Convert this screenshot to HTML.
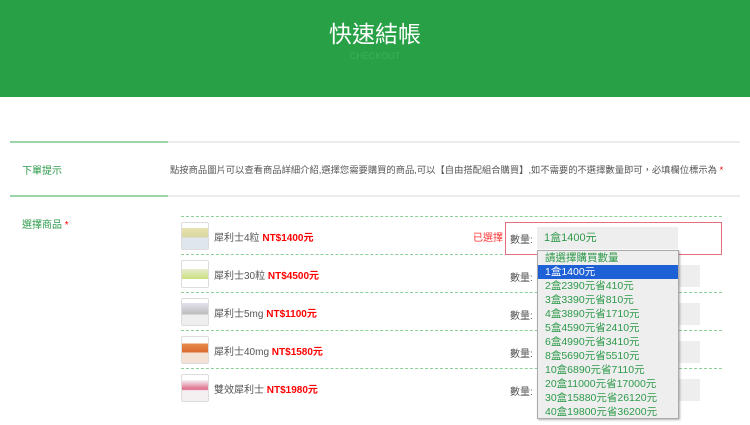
<!DOCTYPE html>
<html><head><meta charset="utf-8"><style>
*{margin:0;padding:0;box-sizing:border-box}
body{width:750px;height:425px;overflow:hidden;background:#fff;font-family:"Liberation Sans","Noto Sans CJK TC",sans-serif;position:relative;color:#555}
.hd{position:absolute;left:0;top:0;width:750px;height:97px;background:#28a046}
.t{position:absolute;top:15px;left:0;width:750px;text-align:center;color:#fff;font-size:23px}
.c{position:absolute;top:51px;left:0;width:750px;text-align:center;color:#3bb25a;font-size:9px}
.a{position:absolute}
.gl{height:2px;background:#9cd6a8}
.gr{height:2px;background:#ececec}
.dot{position:absolute;left:181px;width:541px;border-top:1px dashed #8ccf97}
.lab{font-size:10px;color:#2d9a4a}
.img{position:absolute;left:181px;width:28px;height:28px;border:1px solid #ddd;border-radius:2px;background:#fff}
.pn{position:absolute;left:214px;font-size:10px;color:#555}
.pn b{color:#f00}
.q{position:absolute;left:510px;font-size:10px;color:#555}
.sel{position:absolute;left:537px;width:163px;height:22px;background:#eee}
.dd{position:absolute;left:537px;top:250px;width:142px;height:169px;background:#eee;border:1px solid #aaa;box-shadow:1px 1px 2px rgba(0,0,0,.3)}
.dd div{height:14px;line-height:14px;font-size:10.5px;color:#2d9a4a;padding-left:7px}
.dd .s{background:#1e60d6;color:#fff}
</style></head><body>
<div class="hd"></div>
<div class="t">快速結帳</div>
<div class="c">CHECKOUT</div>
<div class="a gl" style="left:10px;top:141px;width:158px"></div>
<div class="a gr" style="left:168px;top:141px;width:572px"></div>
<div class="a gl" style="left:10px;top:195px;width:158px"></div>
<div class="a gr" style="left:168px;top:195px;width:572px"></div>
<div class="a lab" style="left:22px;top:162px">下單提示</div>
<div class="a" style="left:170px;top:162px;font-size:9.3px;color:#555;white-space:nowrap">點按商品圖片可以查看商品詳細介紹,選擇您需要購買的商品,可以【自由搭配組合購買】,如不需要的不選擇數量即可，必填欄位標示為 <span style="color:#f00">*</span></div>
<div class="a lab" style="left:22px;top:216px">選擇商品 <span style="color:#f00">*</span></div>
<div class="dot" style="top:216px"></div>
<div class="dot" style="top:254px"></div>
<div class="dot" style="top:292px"></div>
<div class="dot" style="top:330px"></div>
<div class="dot" style="top:368px"></div>
<div class="img" style="top:222px;background:linear-gradient(#fff 20%,#e8e2b0 20%,#d9d7a0 55%,#dfe6ee 55%)"></div>
<div class="img" style="top:260px;background:linear-gradient(#fff 30%,#e7ecd2 30%,#c9df7a 70%,#fff 70%)"></div>
<div class="img" style="top:298px;background:linear-gradient(#fff 15%,#e3e3ee 15%,#bbb 60%,#eee 60%)"></div>
<div class="img" style="top:336px;background:linear-gradient(#fff 25%,#e68a4a 25%,#d96a30 60%,#f3e2d5 60%)"></div>
<div class="img" style="top:374px;background:linear-gradient(#fff 20%,#f4f0f2 20%,#e06a8a 55%,#f4f0f2 60%)"></div>
<div class="pn" style="top:229px">犀利士4粒 <b>NT$1400元</b></div>
<div class="pn" style="top:267px">犀利士30粒 <b>NT$4500元</b></div>
<div class="pn" style="top:305px">犀利士5mg <b>NT$1100元</b></div>
<div class="pn" style="top:343px">犀利士40mg <b>NT$1580元</b></div>
<div class="pn" style="top:381px">雙效犀利士 <b>NT$1980元</b></div>
<div class="a" style="left:473px;top:229px;font-size:10px;color:#f33">已選擇</div>
<div class="a" style="left:505px;top:222px;width:217px;height:33px;border:1px solid #e57080"></div>
<div class="sel" style="top:265px"></div>
<div class="sel" style="top:303px"></div>
<div class="sel" style="top:341px"></div>
<div class="sel" style="top:379px"></div>
<div class="a" style="left:537px;top:227px;width:141px;height:22px;background:#eee;font-size:11px;color:#2d9a4a;line-height:22px;padding-left:7px">1盒1400元</div>
<div class="q" style="top:231px">數量:</div>
<div class="q" style="top:269px">數量:</div>
<div class="q" style="top:307px">數量:</div>
<div class="q" style="top:345px">數量:</div>
<div class="q" style="top:383px">數量:</div>
<div class="dd">
<div>請選擇購買數量</div><div class="s">1盒1400元</div><div>2盒2390元省410元</div><div>3盒3390元省810元</div><div>4盒3890元省1710元</div><div>5盒4590元省2410元</div><div>6盒4990元省3410元</div><div>8盒5690元省5510元</div><div>10盒6890元省7110元</div><div>20盒11000元省17000元</div><div>30盒15880元省26120元</div><div>40盒19800元省36200元</div>
</div>
</body></html>
